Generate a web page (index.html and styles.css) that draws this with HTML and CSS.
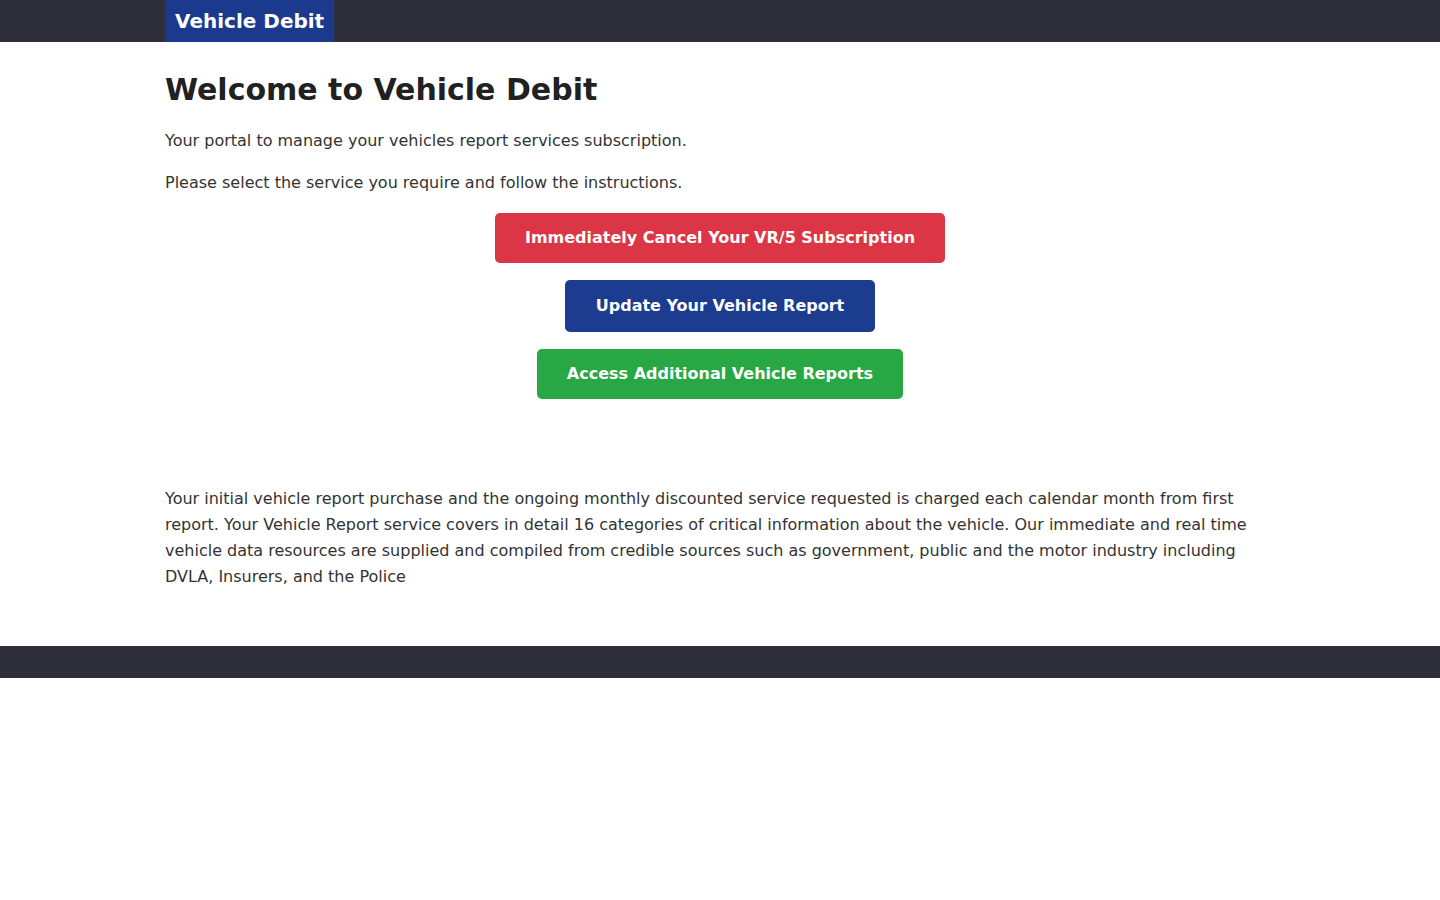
FILE: index.html
```html
<!DOCTYPE html>
<html lang="en">
<head>
<meta charset="utf-8">
<title>Vehicle Debit</title>
<link rel="stylesheet" href="styles.css">
</head>
<body>
<header class="navbar">
  <div class="container">
    <a class="brand" href="#">Vehicle Debit</a>
  </div>
</header>
<main class="container main">
  <h1 class="title">Welcome to Vehicle Debit</h1>
  <p class="lead">Your portal to manage your vehicles report services subscription.</p>
  <p class="lead">Please select the service you require and follow the instructions.</p>
  <div class="actions">
    <a class="btn btn-red" href="#">Immediately Cancel Your VR/5 Subscription</a>
    <a class="btn btn-blue" href="#">Update Your Vehicle Report</a>
    <a class="btn btn-green" href="#">Access Additional Vehicle Reports</a>
  </div>
  <p class="info">Your initial vehicle report purchase and the ongoing monthly discounted service requested is charged each calendar month from first report. Your Vehicle Report service covers in detail 16 categories of critical information about the vehicle. Our immediate and real time vehicle data resources are supplied and compiled from credible sources such as government, public and the motor industry including DVLA, Insurers, and the Police</p>
</main>
<footer class="footer"></footer>
</body>
</html>
```

FILE: styles.css
```css
* { box-sizing: border-box; }
html, body {
  margin: 0;
  padding: 0;
  background: #ffffff;
  font-family: "DejaVu Sans", Verdana, sans-serif;
  font-size: 16px;
  line-height: 1.6;
  color: #333333;
}
.container {
  width: 1140px;
  margin: 0 auto;
  padding: 0 15px;
}
.navbar {
  background: #2e2f3b;
  height: 42px;
}
.navbar .container {
  display: flex;
  height: 42px;
}
.brand {
  display: block;
  background: #1b3a8e;
  color: #ffffff;
  font-weight: bold;
  font-size: 20px;
  line-height: 42px;
  padding: 0 10px;
  text-decoration: none;
}
.main {
  padding-top: 30px;
  padding-bottom: 40px;
}
.title {
  margin: 0 0 20px;
  font-size: 30px;
  line-height: 1.2;
  font-weight: bold;
  color: #212121;
}
.lead {
  margin: 0 0 16px;
}
.actions {
  display: flex;
  flex-direction: column;
  align-items: center;
  gap: 17px;
  margin-top: 18px;
  margin-bottom: 87px;
}
.btn {
  display: block;
  height: 50px;
  line-height: 50px;
  padding: 0 30px;
  color: #ffffff;
  font-weight: bold;
  font-size: 16px;
  border-radius: 5px;
  text-decoration: none;
}
.btn-red { background: #dc3545; }
.btn-blue { background: #1b3c8f; height: 52px; line-height: 52px; padding: 0 31px; }
.btn-green { background: #28a745; }
.info {
  margin: 0 0 16px;
  line-height: 26px;
}
.footer {
  background: #2e2f3b;
  height: 32px;
}
```
